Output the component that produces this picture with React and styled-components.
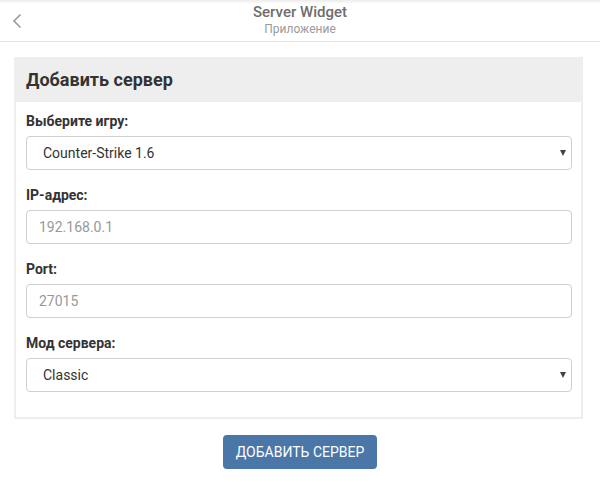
import React from "react";
import styled, { createGlobalStyle } from "styled-components";

const GlobalStyle = createGlobalStyle`
  * {
    box-sizing: border-box;
  }
  body {
    margin: 0;
    background: #fff;
    font-family: Roboto, "Liberation Sans", Arial, sans-serif;
    color: #333;
  }
`;

const Page = styled.div`
  width: 600px;
  min-height: 485px;
  background: #fff;
`;

const Header = styled.header`
  display: grid;
  grid-template-columns: 60px 1fr 60px;
  align-items: center;
  height: 42px;
  border-bottom: 1px solid #e3e3e3;
  background: linear-gradient(#ececec 0, #fff 4px);
`;

const BackButton = styled.button`
  display: flex;
  align-items: center;
  padding: 0 0 0 12px;
  height: 100%;
  border: 0;
  background: none;
  cursor: pointer;
`;

const TitleBlock = styled.div`
  display: flex;
  flex-direction: column;
  align-items: center;
`;

const Title = styled.div`
  font-size: 15px;
  line-height: 17px;
  font-weight: 500;
  color: #6d6d6d;
`;

const Subtitle = styled.div`
  font-size: 12px;
  line-height: 16px;
  color: #9a9a9a;
`;

const Panel = styled.section`
  width: 569px;
  margin: 15px 0 0 14px;
  border: 2px solid #eeeeee;
  border-top: 0;
`;

const PanelHeading = styled.h3`
  margin: 0 -2px;
  padding: 10px 12px;
  background: #eeeeee;
  font-size: 18px;
  line-height: 25px;
  font-weight: 700;
  color: #333;
`;

const PanelBody = styled.div`
  padding: 9px 9px 10px 10px;
`;

const FormGroup = styled.div`
  margin-bottom: 15px;
`;

const Label = styled.label`
  display: block;
  margin-bottom: 5px;
  font-size: 14px;
  line-height: 20px;
  font-weight: 700;
  color: #333;
`;

const SelectWrap = styled.div`
  position: relative;
`;

const Select = styled.select`
  display: block;
  width: 100%;
  height: 34px;
  padding: 0 30px 0 16px;
  border: 1px solid #cfcfcf;
  border-radius: 4px;
  background: #fff;
  font-family: inherit;
  font-size: 14px;
  color: #333;
  appearance: none;
  outline: none;
`;

const Caret = styled.span`
  position: absolute;
  right: 6px;
  top: 14px;
  width: 0;
  height: 0;
  border-left: 3.5px solid transparent;
  border-right: 3.5px solid transparent;
  border-top: 6px solid #444;
  pointer-events: none;
`;

const Input = styled.input`
  display: block;
  width: 100%;
  height: 34px;
  padding: 0 12px;
  border: 1px solid #cfcfcf;
  border-radius: 4px;
  font-family: inherit;
  font-size: 14px;
  color: #333;
  outline: none;
  &::placeholder {
    color: #999;
  }
`;

const Actions = styled.div`
  display: flex;
  justify-content: center;
  padding: 16px 0 0 0;
`;

const SubmitButton = styled.button`
  height: 34px;
  padding: 0 13px;
  border: 0;
  border-radius: 4px;
  background: #4a76a8;
  color: #fff;
  font-family: inherit;
  font-size: 14px;
  text-transform: uppercase;
  cursor: pointer;
`;

const games = ["Counter-Strike 1.6", "Counter-Strike: Source", "CS:GO"];
const mods = ["Classic", "Public", "Deathmatch"];

function SelectField({ label, options }) {
  return (
    <FormGroup>
      <Label>{label}</Label>
      <SelectWrap>
        <Select defaultValue={options[0]}>
          {options.map((o) => (
            <option key={o} value={o}>
              {o}
            </option>
          ))}
        </Select>
        <Caret />
      </SelectWrap>
    </FormGroup>
  );
}

function TextField({ label, placeholder }) {
  return (
    <FormGroup>
      <Label>{label}</Label>
      <Input type="text" placeholder={placeholder} />
    </FormGroup>
  );
}

export default function App() {
  return (
    <Page>
      <GlobalStyle />
      <Header>
        <BackButton aria-label="Назад">
          <svg width="10" height="16" viewBox="0 0 10 16" fill="none">
            <path d="M8.5 1.5 2 8l6.5 6.5" stroke="#9a9a9a" strokeWidth="1.6" />
          </svg>
        </BackButton>
        <TitleBlock>
          <Title>Server Widget</Title>
          <Subtitle>Приложение</Subtitle>
        </TitleBlock>
        <div />
      </Header>
      <Panel>
        <PanelHeading>Добавить сервер</PanelHeading>
        <PanelBody>
          <SelectField label="Выберите игру:" options={games} />
          <TextField label="IP-адрес:" placeholder="192.168.0.1" />
          <TextField label="Port:" placeholder="27015" />
          <SelectField label="Мод сервера:" options={mods} />
        </PanelBody>
      </Panel>
      <Actions>
        <SubmitButton>Добавить сервер</SubmitButton>
      </Actions>
    </Page>
  );
}
